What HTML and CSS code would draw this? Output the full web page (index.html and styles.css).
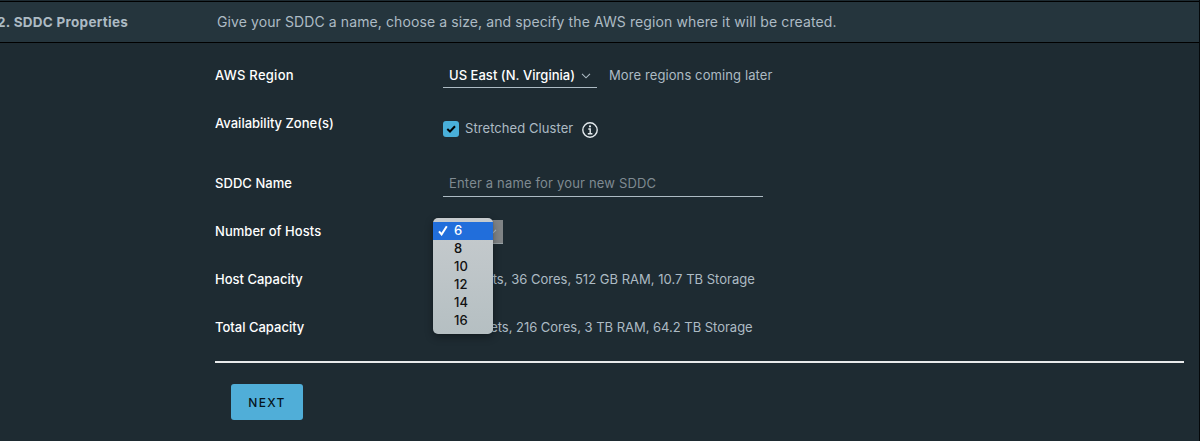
FILE: index.html
```html
<!DOCTYPE html>
<html lang="en">
<head>
<meta charset="utf-8">
<title>SDDC Properties</title>
<link rel="stylesheet" href="styles.css">
</head>
<body>
<main class="wizard">
  <header class="step-header">
    <h2 class="step-title"><span>2. SDDC Properties</span></h2>
    <p class="step-description">Give your SDDC a name, choose a size, and specify the AWS region where it will be created.</p>
  </header>
  <form class="step-form">
    <div class="row">
      <span class="label region-label">AWS Region</span>
      <div class="value">
        <div class="select"><span>US East (N. Virginia)</span>
          <svg class="chevron" viewBox="0 0 10 6"><path d="M1 .8 5 4.8 9 .8"/></svg>
        </div>
        <span class="hint">More regions coming later</span>
      </div>
    </div>
    <div class="row zone-row">
      <span class="label zone-label">Availability Zone(s)</span>
      <div class="value zone-value">
        <span class="checkbox"><svg viewBox="0 0 16 16"><path d="M4.3 8 7 10.5 12 5.3"/></svg></span>
        <span class="checkbox-label">Stretched Cluster</span>
        <svg class="info" viewBox="0 0 16 16"><circle cx="8" cy="8" r="7.2"/><path d="M6.3 7H8.2V11.5M5.8 11.7H10.4"/><circle class="info-dot" cx="8" cy="4.4" r="1.1"/></svg>
      </div>
    </div>
    <div class="row">
      <span class="label name-label">SDDC Name</span>
      <div class="value"><div class="input"><span>Enter a name for your new SDDC</span></div></div>
    </div>
    <div class="row">
      <span class="label hosts-label">Number of Hosts</span>
      <div class="value">
        <div class="host-select">
          <svg class="chevron" viewBox="0 0 10 6"><path d="M1 .8 5 4.8 9 .8"/></svg>
          <ul class="menu">
            <li class="selected"><svg viewBox="0 0 10 11"><path d="M1 6.3 3.6 9.4 8.8 1.2"/></svg>6</li>
            <li>8</li>
            <li>10</li>
            <li>12</li>
            <li>14</li>
            <li>16</li>
          </ul>
        </div>
      </div>
    </div>
    <div class="row">
      <span class="label host-cap-label">Host Capacity</span>
      <div class="value"><span class="capacity host-capacity">2 Sockets, 36 Cores, 512 GB RAM, 10.7 TB Storage</span></div>
    </div>
    <div class="row">
      <span class="label total-label">Total Capacity</span>
      <div class="value"><span class="capacity total-capacity">12 Sockets, 216 Cores, 3 TB RAM, 64.2 TB Storage</span></div>
    </div>
    <div class="divider"></div>
    <button class="next" type="button">NEXT</button>
  </form>
</main>
</body>
</html>
```
FILE: styles.css
```css
* { box-sizing: border-box; }
body {
  margin: 0;
  background: #1e2b32;
  color: #adbbc4;
  font: 13px/18px Inter, "Noto Sans", sans-serif;
  white-space: nowrap;
}
.wizard {
  height: 441px;
  padding-top: 1px;
  border-right: 1px solid #05080a;
  overflow: hidden;
}
.step-header {
  display: grid;
  grid-template-columns: 217px 1fr;
  align-items: center;
  height: 42px;
  border: solid #000;
  border-width: 1px 0;
  background: #25353d;
}
.step-title { margin: 0 0 0 -3px; font-size: 13.5px; font-weight: 700; letter-spacing: .28px; }
.step-description { margin: 0; font-size: 14px; letter-spacing: .1px; }
.step-form { padding: 9px 15px 0 215px; }
.row {
  display: grid;
  grid-template-columns: 228px 1fr;
  align-items: center;
  height: 48px;
}
.zone-row { height: 60px; align-items: start; padding-top: 14px; }
.label { padding-bottom: 2px; color: #fff; font-weight: 500; }
.region-label { letter-spacing: .27px; }
.name-label, .hosts-label { letter-spacing: .05px; }
.value { display: flex; align-items: center; }
.select {
  display: flex;
  align-items: center;
  justify-content: space-between;
  width: 154px;
  height: 24px;
  padding: 0 6px;
  border-bottom: 1px solid #adbbc4;
  color: #fff;
  font-weight: 500;
}
.select span { padding-bottom: 1px; letter-spacing: .03px; }
.chevron { width: 10px; height: 6px; fill: none; stroke: #adbbc4; stroke-width: 1.1; }
.hint { margin-left: 12px; padding-bottom: 2px; letter-spacing: .1px; }
.zone-value { padding-top: 4px; }
.checkbox { width: 16px; height: 16px; margin-top: 2px; border-radius: 3px; background: #49afd9; }
.checkbox svg { display: block; fill: none; stroke: #000; stroke-width: 2; }
.checkbox-label { width: 117px; margin-left: 6px; letter-spacing: .07px; }
.info { width: 16px; height: 16px; margin-top: 4px; fill: none; stroke: #e3e9ec; stroke-width: 1.4; }
.info-dot { fill: #e3e9ec; stroke: none; }
.input {
  width: 320px;
  height: 25px;
  padding: 2px 6px;
  border-bottom: 1px solid #adbbc4;
  color: #7f8a91;
  letter-spacing: .17px;
}
.host-select {
  position: relative;
  display: flex;
  align-items: center;
  justify-content: flex-end;
  width: 60px;
  height: 24px;
  padding-right: 6px;
  border-bottom: 1px solid #98a1a5;
  background: #808486;
}
.menu {
  position: absolute;
  z-index: 1;
  top: -2px;
  left: -10px;
  width: 60px;
  height: 116px;
  margin: 0;
  padding: 4px 0;
  border-radius: 5px;
  background: linear-gradient(#c6cbce, #b5bfc2);
  box-shadow: 0 3px 9px #0005, 0 0 1px #0008;
  color: #111;
  font-weight: 500;
  list-style: none;
}
.menu li { height: 18px; padding-left: 21px; line-height: 16px; }
.menu .selected { position: relative; background: #216edb; color: #fff; }
.menu svg {
  position: absolute;
  top: 3px;
  left: 5px;
  width: 10px;
  height: 11px;
  fill: none;
  stroke: #fff;
  stroke-width: 2;
}
.capacity { padding-bottom: 2px; }
.host-capacity { letter-spacing: .02px; }
.total-capacity { letter-spacing: -.02px; }
.divider { height: 2px; margin-top: 9px; background: #e8eaeb; }
.next {
  display: block;
  width: 72px;
  height: 36px;
  margin: 21px 0 0 16px;
  padding: 1px 0 0;
  border: 0;
  border-radius: 3px;
  background: #50aed8;
  color: #06151d;
  font: 500 12px/18px Inter, "Noto Sans", sans-serif;
  letter-spacing: 1.4px;
}
```
